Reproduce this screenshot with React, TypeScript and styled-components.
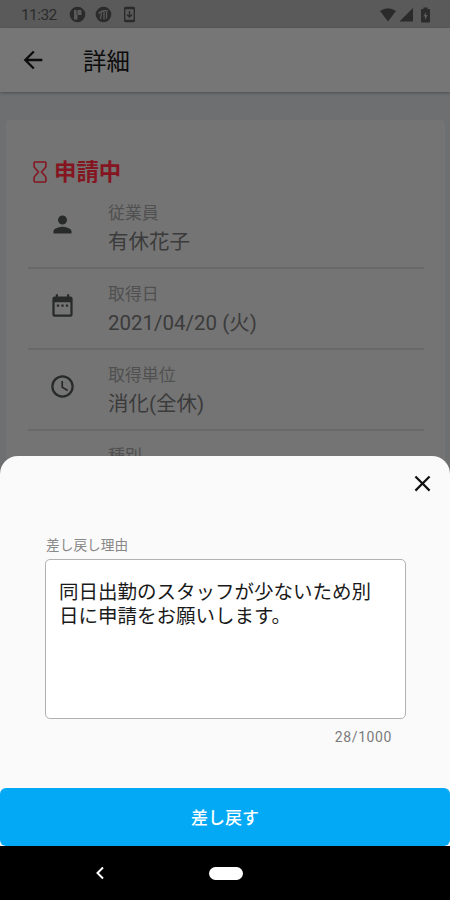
import React from "react";
import styled, { createGlobalStyle } from "styled-components";

const GlobalStyle = createGlobalStyle`
  *, *::before, *::after { box-sizing: border-box; }
  body { margin: 0; background: #000; font-family: Roboto, "Noto Sans CJK JP", sans-serif; }
`;

const Phone = styled.div`
  position: relative;
  display: flex;
  flex-direction: column;
  width: 450px;
  height: 900px;
  overflow: hidden;
  background: #6d6f71;
`;

const StatusBar = styled.header`
  display: flex;
  flex: none;
  align-items: center;
  justify-content: space-between;
  height: 28px;
  padding: 1px 19px 0 21px;
  background: #5a5a5a;
  color: #2b2b2b;
`;

const StatusGroup = styled.div<{ $gap: number }>`
  display: flex;
  align-items: center;
  gap: ${(p) => p.$gap}px;
  svg { display: block; }
`;

const Clock = styled.span`
  width: 39px;
  font-size: 15.5px;
  line-height: 20px;
  letter-spacing: -0.6px;
  white-space: nowrap;
`;

const AppBar = styled.div`
  display: flex;
  flex: none;
  align-items: center;
  gap: 37px;
  height: 64px;
  padding: 0 19px;
  background: #767676;
  box-shadow: 0 1px 3px rgba(0, 0, 0, 0.3);
  color: #0c0c0c;
  z-index: 1;
`;

const Title = styled.h1`
  margin: 4px 0 0 -1px;
  font-size: 23.4px;
  font-weight: 400;
  line-height: 34px;
`;

const Card = styled.main`
  flex: none;
  height: 420px;
  margin: 28px 5px 0 6px;
  padding: 35px 21px 0 22px;
  border-radius: 4px;
  background: #747474;
`;

const Status = styled.div`
  display: flex;
  align-items: center;
  gap: 7px;
  height: 34px;
  padding: 0 0 1px 5px;
  color: #841521;
  font-size: 22.4px;
  font-weight: 700;
  line-height: 34px;
  span { padding-top: 1px; }
`;

const Row = styled.div`
  display: flex;
  height: 81px;
  border-bottom: 2px solid #696969;
  &:first-child {
    height: 80px;
    > * { margin-top: -1.5px; }
  }
`;

const RowIcon = styled.div`
  flex: none;
  width: 80px;
  padding: 23px 0 0 21px;
  color: #282a2a;
  svg { display: block; }
`;

const RowText = styled.div`
  padding-top: 12px;
  white-space: nowrap;
`;

const Label = styled.div`
  color: #505050;
  font-size: 16.9px;
  line-height: 26px;
`;

const Value = styled.div`
  margin-top: 1px;
  color: #3b3b3b;
  font-size: 20.5px;
  line-height: 30px;
`;

const Sheet = styled.section`
  position: absolute;
  right: 0;
  bottom: 0;
  left: 0;
  display: flex;
  flex-direction: column;
  height: 444px;
  border-radius: 18px 18px 0 0;
  background: #fafafa;
  z-index: 2;
`;

const SheetHead = styled.div`
  display: flex;
  justify-content: flex-end;
  height: 78px;
  padding: 14px 15px 0;
`;

const IconButton = styled.button`
  width: 26px;
  height: 26px;
  padding: 0;
  border: 0;
  background: none;
  color: #111;
  svg { display: block; }
`;

const Form = styled.div`
  flex: 1;
  padding: 0 44px 0 45px;
`;

const FieldLabel = styled.label`
  display: block;
  height: 25px;
  padding-left: 1px;
  color: #888;
  font-size: 13.7px;
  line-height: 22px;
`;

const Reason = styled.div`
  height: 160px;
  padding: 21px 13px;
  border: 1px solid #b1b1b1;
  border-radius: 5px;
  background: #fff;
  color: #1a1a1a;
  font-size: 19.5px;
  line-height: 23.5px;
  white-space: nowrap;
`;

const Counter = styled.div`
  padding: 8px 14px 0 0;
  color: #7b7b7b;
  font-size: 14px;
  line-height: 20px;
  letter-spacing: 0.6px;
  text-align: right;
`;

const Submit = styled.button`
  flex: none;
  height: 58px;
  padding: 2px 0 0;
  border: 0;
  border-radius: 6px;
  background: #03a9f4;
  color: #fff;
  font-family: inherit;
  font-size: 17px;
  font-weight: 500;
  line-height: 26px;
`;

const NavBar = styled.nav`
  display: grid;
  flex: none;
  grid-template-columns: 1fr 34px 1fr;
  align-items: center;
  height: 54px;
  background: #000;
  color: #fff;
  svg { display: block; margin-left: 94px; }
`;

const HomePill = styled.div`
  width: 34px;
  height: 13px;
  margin-left: 1px;
  border-radius: 7px;
  background: #fff;
`;

function Glyph({ d, size = 24 }: { d: string; size?: number }) {
  return (
    <svg width={size} height={size} viewBox="0 0 24 24" fill="currentColor">
      <path fillRule="evenodd" d={d} />
    </svg>
  );
}

const icons = {
  back: "M20 11H7.83l5.59-5.59L12 4l-8 8 8 8 1.41-1.41L7.83 13H20v-2z",
  close:
    "M19 6.41 17.59 5 12 10.59 6.41 5 5 6.41 10.59 12 5 17.59 6.41 19 12 13.41 17.59 19 19 17.59 13.41 12z",
  person:
    "M12 12a4 4 0 1 0 0-8 4 4 0 0 0 0 8zm0 2c-2.67 0-8 1.34-8 4v2h16v-2c0-2.66-5.33-4-8-4z",
  date: "M19 4h-1V2h-2v2H8V2H6v2H5a2 2 0 0 0-2 2v14a2 2 0 0 0 2 2h14a2 2 0 0 0 2-2V6a2 2 0 0 0-2-2zm0 16H5V9h14v11zM7 11h2v2H7zm4 0h2v2h-2zm4 0h2v2h-2z",
  clock:
    "M11.99 2C6.47 2 2 6.48 2 12s4.47 10 9.99 10C17.52 22 22 17.52 22 12S17.52 2 11.99 2zM12 20a8 8 0 1 1 0-16 8 8 0 0 1 0 16zm.5-13H11v6l5.25 3.15.75-1.23-4.5-2.67z",
};

const rows = [
  { icon: icons.person, label: "従業員", value: "有休花子" },
  { icon: icons.date, label: "取得日", value: "2021/04/20 (火)" },
  { icon: icons.clock, label: "取得単位", value: "消化(全休)" },
  { icon: "", label: "種別", value: "" },
];

export default function App() {
  return (
    <>
      <GlobalStyle />
      <Phone>
        <StatusBar>
          <StatusGroup $gap={9}>
            <Clock>11:32</Clock>
            <svg width="17" height="17" viewBox="0 0 17 17">
              <circle cx="8.5" cy="8.5" r="7.8" fill="#2b2b2b" />
              <path d="M5 4h7.500v5H8.500v4.500H5z" fill="#5a5a5a" />
              <path d="M8 4v5" stroke="#2b2b2b" strokeWidth="0.800" />
            </svg>
            <svg width="17" height="17" viewBox="0 0 17 17">
              <circle cx="8.5" cy="8.5" r="7.8" fill="#2b2b2b" />
              <path d="M3.500 7.500Q7 3.500 13 5M6.500 6.500 5.500 13M9 5.500v8M11.500 6v6.500" fill="none" stroke="#5a5a5a" strokeWidth="1.300" />
            </svg>
            <svg width="17" height="17" viewBox="0 0 17 17" fill="none" stroke="#2b2b2b">
              <rect x="3.700" y="1.500" width="9.600" height="14" rx="1" strokeWidth="1.400" />
              <path d="M3.500 2.300h10M3.500 14.700h10" strokeWidth="2" />
              <path d="M8.500 5v5.500M6 8.500l2.500 2.500L11 8.500" strokeWidth="1.400" />
            </svg>
          </StatusGroup>
          <StatusGroup $gap={2}>
            <svg width="18" height="16" viewBox="0 0 18 16" fill="currentColor">
              <path d="M1 4Q9-1.500 17 4L9 14.500z" />
            </svg>
            <svg width="15" height="16" viewBox="0 0 15 16" fill="currentColor">
              <path d="M14 1v13.500H.5z" />
            </svg>
            <svg width="15" height="16" viewBox="0 0 15 16" fill="currentColor">
              <path fillRule="evenodd" d="M7.500 2V.5h4V2H13q1 0 1 1v11.500q0 1-1 1H6q-1 0-1-1V3q0-1 1-1zM10 5 7.300 9.500H9V13l2.800-5H10z" />
            </svg>
          </StatusGroup>
        </StatusBar>
        <AppBar>
          <Glyph d={icons.back} size={28} />
          <Title>詳細</Title>
        </AppBar>
        <Card>
          <Status>
            <svg width="14" height="22" viewBox="0 0 14 22" fill="none" stroke="currentColor" strokeWidth="1.600" strokeLinejoin="round">
              <path d="M2 1h10q1 0 1 1v2.500q0 1.500-1 2.500L8.500 11l3.500 4q1 1 1 2.500V20q0 1-1 1H2q-1 0-1-1v-2.500q0-1.500 1-2.500l3.500-4L2 7Q1 6 1 4.500V2q0-1 1-1z" />
            </svg>
            <span>申請中</span>
          </Status>
          <section>
            {rows.map((row) => (
              <Row key={row.label}>
                <RowIcon>{row.icon && <Glyph d={row.icon} size={27} />}</RowIcon>
                <RowText>
                  <Label>{row.label}</Label>
                  <Value>{row.value}</Value>
                </RowText>
              </Row>
            ))}
          </section>
        </Card>
        <Sheet>
          <SheetHead>
            <IconButton aria-label="閉じる">
              <Glyph d={icons.close} size={27} />
            </IconButton>
          </SheetHead>
          <Form>
            <FieldLabel>差し戻し理由</FieldLabel>
            <Reason role="textbox" aria-multiline="true">
              同日出勤のスタッフが少ないため別
              <br />
              日に申請をお願いします。
            </Reason>
            <Counter>28/1000</Counter>
          </Form>
          <Submit>差し戻す</Submit>
          <NavBar>
            <svg width="12" height="14" viewBox="0 0 12 14" fill="none" stroke="currentColor" strokeWidth="2">
              <path d="M9 1.500 3.500 7 9 12.500" />
            </svg>
            <HomePill />
          </NavBar>
        </Sheet>
      </Phone>
    </>
  );
}
